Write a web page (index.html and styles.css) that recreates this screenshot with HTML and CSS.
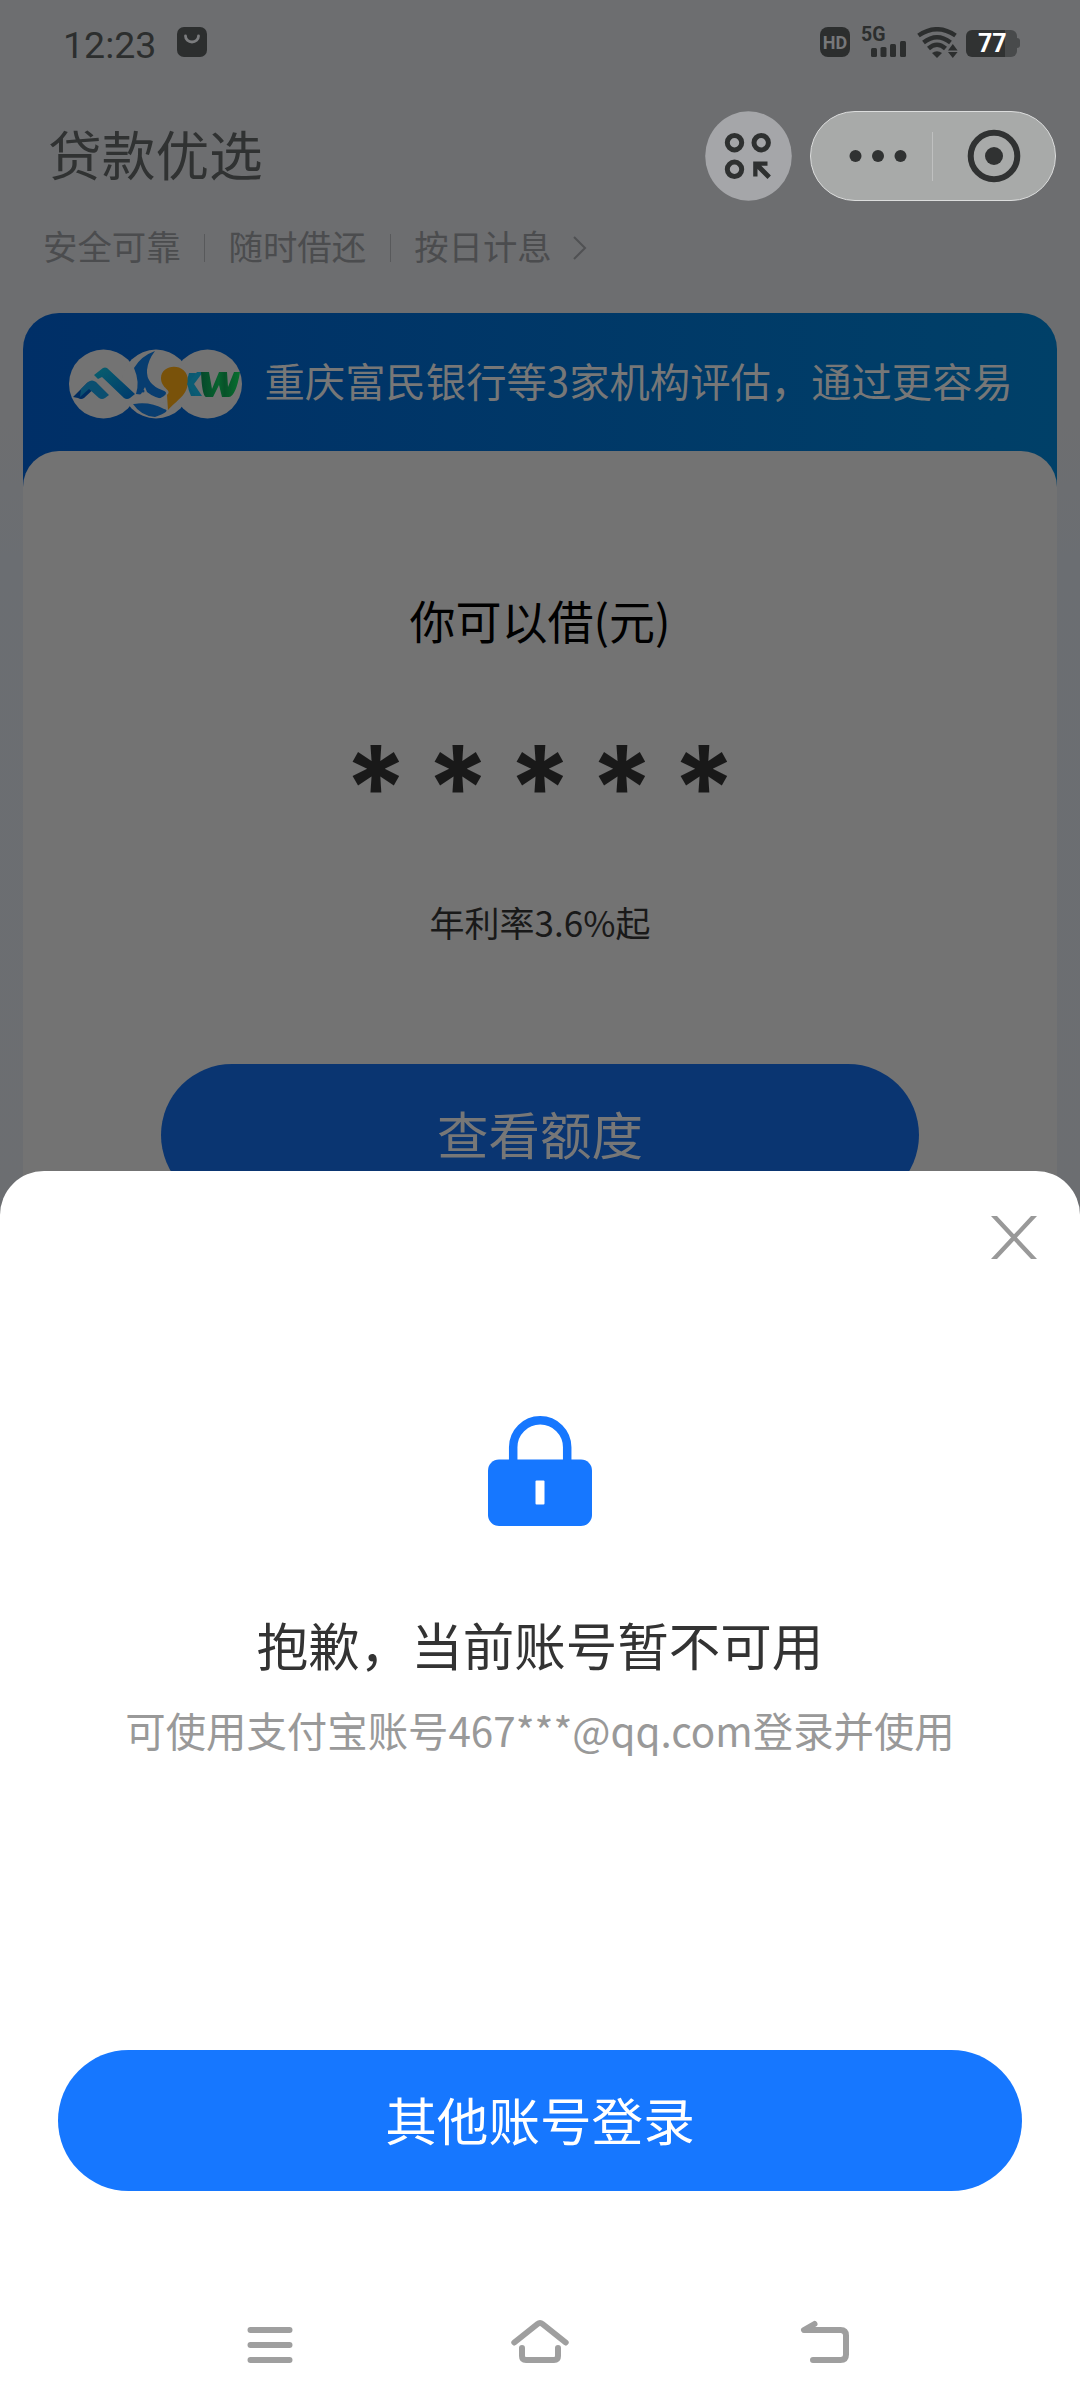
FILE: index.html
```html
<!DOCTYPE html>
<html lang="zh-CN">
<head>
<meta charset="utf-8">
<title>贷款优选</title>
<link rel="stylesheet" href="styles.css">
</head>
<body>
<div class="screen">
  <header class="status">
    <span class="clock">12:23</span>
    <svg class="bag" width="30" height="30" viewBox="0 0 30 30"><rect width="30" height="30" rx="7" fill="#2c2e2e"/><path d="M8.500 9a6.500 6 0 0 0 13 0" fill="none" stroke="#7b7c7e" stroke-width="2.800" stroke-linecap="round"/></svg>
    <div class="indicators">
      <span class="hd">HD</span>
      <div class="signal">
        <span class="net">5G</span>
        <svg width="47" height="30" viewBox="0 0 47 30" fill="#2c2e2e"><rect x="10" y="21" width="6" height="9" rx="1.500"/><rect x="19.500" y="20" width="6" height="10" rx="1.500"/><rect x="29" y="17" width="6" height="13" rx="1.500"/><rect x="39" y="14" width="6" height="16" rx="1.500"/></svg>
      </div>
      <svg class="wifi" width="42" height="32" viewBox="0 0 42 32"><g fill="none" stroke="#2c2e2e" stroke-width="4.500"><path d="M1.500 8.500Q20 -4 38.500 8.500"/><path d="M6.500 15.500Q20 5 33.500 15.500"/><path d="M11.500 21.500Q20 14 28.500 21.500"/></g><path d="M15 26q5-3.500 10 0l-5 5z" fill="#2c2e2e"/><path d="M31 23.500l4.800-6.500 4.800 6.500zM31 25h9.600l-4.800 6z" fill="#2c2e2e"/></svg>
      <div class="battery"><span>77</span></div>
    </div>
  </header>

  <div class="titlebar">
    <h1>贷款优选</h1>
    <svg class="apps" width="87" height="90" viewBox="0 0 87 90"><ellipse cx="43.500" cy="45" rx="43.300" ry="44.700" fill="#a5a6a9"/><g fill="none" stroke="#2e3030" stroke-width="5"><circle cx="29.500" cy="31.700" r="7.200"/><circle cx="56.200" cy="31.700" r="7.200"/><circle cx="29.500" cy="58.300" r="7.200"/></g><path d="M48.200 50.500h14.300v4.200h-6.200l9.600 9.800-3.400 3.500-10-10v7.400h-4.300z" fill="#2e3030"/></svg>
    <div class="capsule">
      <svg width="58" height="14" viewBox="0 0 58 14" fill="#303232"><circle cx="6.500" cy="7" r="6"/><circle cx="29" cy="7" r="6"/><circle cx="51.500" cy="7" r="6"/></svg>
      <i class="split"></i>
      <svg width="54" height="54" viewBox="0 0 54 54"><circle cx="27" cy="27" r="23.300" fill="none" stroke="#303232" stroke-width="6"/><circle cx="27" cy="27" r="9" fill="#303232"/></svg>
    </div>
  </div>

  <div class="features">
    <span>安全可靠</span><i></i><span>随时借还</span><i></i><span>按日计息</span>
    <svg width="16" height="24" viewBox="0 0 16 24"><path d="M2 1l11 11L2 23" fill="none" stroke="#505153" stroke-width="2"/></svg>
  </div>

  <main class="offer">
    <div class="banner">
      <svg class="logos" width="174" height="70" viewBox="0 0 174 70">
        <defs>
          <linearGradient id="sky" x1="0" y1="0" x2="1" y2="1"><stop offset="0" stop-color="#08606e"/><stop offset="1" stop-color="#00396c"/></linearGradient>
          <linearGradient id="leaf" x1="0" y1="0" x2="1" y2="0"><stop offset="0" stop-color="#06482a"/><stop offset=".45" stop-color="#08642f"/><stop offset=".6" stop-color="#075229"/><stop offset="1" stop-color="#08702f"/></linearGradient>
        </defs>
        <circle cx="34.500" cy="35" r="34.500" fill="#737373"/><circle cx="87" cy="35" r="34.500" fill="#737373"/><circle cx="138.500" cy="35" r="34.500" fill="#737373"/>
        <path d="M4 48l14-14q4-3 8 0l3 2-14 13q-3 2-6 0z" fill="#002d61"/>
        <path d="M12 40l7-7q4-3 8 0l13 13-4 3q-3 2-6 0L20 40l-9 8z" fill="#0b4f70"/>
        <path d="M25 26l9-7q2-1 4 0l28 26-5 4q-3 2-6 0L33 28l-4 2z" fill="url(#sky)"/>
        <path d="M86 2Q72 7 65 19q6 14 2 26l9 1q10 8 19 1 5-4-2-6-16-6-15-20 1-10 8-19z" fill="#083d70"/>
        <path d="M64 55q17-3 31 5 8 2-9 8-14-1-22-13z" fill="#083d70"/>
        <path d="M62 53l10-8 4-7 2 5q10 8 22 7l-7 4q-17-2-30 1z" fill="#737373"/><circle cx="74" cy="42" r="1.500" fill="#083d70"/>
        <path d="M92 29c0-15 27-16 27 3 0 14-11 19-20 29l-1-15c6-5-6-6-6-17z" fill="#79520a"/>
        <path d="M120 24h7l-3 11 3 12h-5q-6-13-2-23z" fill="#0a5972"/><path d="M134 23h-6l-10 12 9 12h6l-8-12z" fill="#0b5c74"/>
        <path d="M132 23h8l3 17 7-17h8l1 15 6-15h6q-4 24-11 25h-7l-3-12-6 12h-7q-4-1-5-25z" fill="url(#leaf)"/>
      </svg>
      <p>重庆富民银行等3家机构评估，通过更容易</p>
    </div>
    <section class="quota">
      <h2>你可以借(元)</h2>
      <div class="amount"><span>*</span><span>*</span><span>*</span><span>*</span><span>*</span></div>
      <p class="rate">年利率3.6%起</p>
      <div class="check">查看额度</div>
    </section>
  </main>

  <section class="sheet">
    <svg class="close" width="48" height="44" viewBox="0 0 48 44"><path d="M1 0h6l40 43h-6zM41 0h6L7 43H1z" fill="#999"/></svg>
    <svg class="lock" width="104" height="110" viewBox="0 0 104 110"><rect y="43.500" width="104" height="66.500" rx="11" fill="#1677ff"/><path d="M25.200 46V31.300a27 27 0 0 1 54 0V46" fill="none" stroke="#1677ff" stroke-width="8.500"/><rect x="47.500" y="64.500" width="9" height="24" rx="1" fill="#fff"/></svg>
    <h2>抱歉，当前账号暂不可用</h2>
    <p>可使用支付宝账号467***@qq.com登录并使用</p>
    <div class="login">其他账号登录</div>
    <nav>
      <svg width="60" height="60" viewBox="0 0 60 60"><path d="M10.500 15h39M10.500 30h39M10.500 45h39"/></svg>
      <svg width="60" height="60" viewBox="0 0 60 60"><path d="M4.300 27.500L27.500 9q2.500-2 5 0L55.700 27.500M12 33v8q0 4 4 4h28q4 0 4-4v-8"/></svg>
      <svg width="60" height="60" viewBox="0 0 60 60"><path d="M34.500 9L24 15H60.500q5.500 0 5.500 5.500v19q0 5.500-5.500 5.500H33"/></svg>
    </nav>
  </section>
</div>
</body>
</html>
```
FILE: styles.css
```css
* { box-sizing: border-box; margin: 0; padding: 0; }
body { font-family: "Noto Sans CJK SC", "Noto Sans", sans-serif; font-weight: 400; }
h1, h2 { font-weight: 400; }
svg { display: block; flex: none; }

.screen {
  position: relative;
  width: 1080px;
  height: 2408px;
  overflow: hidden;
  background: linear-gradient(#6d6e70 0, #6d6e70 420px, #6b6e72 560px, #6c6e71 1200px);
}

.status { display: flex; height: 111px; padding: 27px 60px 0 63px; color: #2c2e2e; }
.clock { width: 114px; font: 37.500px/36px Roboto, sans-serif; }
.indicators { display: flex; margin-left: auto; }
.hd {
  width: 30px; height: 30px; border-radius: 8px; background: #2c2e2e; color: #77787a;
  font: 700 18px/31px Roboto, sans-serif; text-align: center;
}
.signal { display: grid; margin-left: 11px; }
.signal > * { grid-area: 1 / 1; }
.net { font: 700 19.500px/16px Roboto, sans-serif; }
.wifi { margin-left: 9px; }
.battery {
  display: flex; width: 51px; height: 27px; margin: 3px 3px 0 7px; padding-left: 12px;
  border-radius: 6px; background: linear-gradient(90deg, #303232 39px, #484a4b 39px);
  color: #fff; font: 700 25px/28px Roboto, sans-serif;
}
.battery::after { content: ""; flex: none; width: 3px; height: 10px; margin: 8px 0 0 10.500px; border-radius: 0 3px 3px 0; background: #484a4b; }

.titlebar { display: flex; height: 90px; padding: 0 24px 0 48px; }
h1 { width: 656.500px; font-size: 53.700px; line-height: 83px; color: #303232; }
.capsule {
  display: flex; align-items: center; width: 246px; margin-left: 18.500px; padding-left: 38px;
  border: 1px solid #dcdddd; border-radius: 45px; background: #a8aaa9;
}
.split { width: 1px; height: 49px; margin: 0 34px 0 25px; background: #bfc0c0; }

.features { display: flex; align-items: center; height: 112px; padding: 0 0 25px 43px; font-size: 34.400px; line-height: 50px; color: #4b4c4e; }
.features i { width: 1px; height: 28px; margin: 6px 23.500px 0; background: #58595b; }
.features svg { margin: 6px 0 0 20px; }

.offer { width: 1034px; margin-left: 23px; border-radius: 36px 36px 0 0; background: linear-gradient(90deg, #002f67, #004068); }
.banner { display: flex; align-items: center; height: 138px; padding: 0 0 0 45.500px; color: #777; }
.logos { margin-top: 3px; }
.banner p { margin: -6px 0 0 22px; font-size: 40.350px; white-space: nowrap; }
.quota { display: flex; flex-direction: column; align-items: center; height: 900px; padding-top: 138px; border-radius: 36px 36px 0 0; background: #737373; }
.quota h2 { font-size: 46px; line-height: 60px; color: #000; }
.amount { display: flex; height: 100px; margin-top: 88px; color: #191919; font: 700 116px/100px Inter, sans-serif; }
.amount span { display: flex; justify-content: center; width: 82px; }
.rate { margin-top: 60px; font-size: 35px; line-height: 50px; color: #191919; }
.check { width: 758px; height: 142px; margin-top: 117px; border-radius: 71px; background: #0a3571; color: #777; font-size: 51.500px; line-height: 138px; text-align: center; }

.sheet {
  position: absolute; left: 0; right: 0; top: 1171px; bottom: 0;
  display: flex; flex-direction: column; align-items: center;
  border-radius: 44px 44px 0 0; background: #fff;
}
.close { margin: 45px 42px 0 auto; }
.lock { margin-top: 156px; }
.sheet h2 { margin-top: 80px; font-size: 51.500px; line-height: 76px; color: #333; }
.sheet p { margin-top: 18px; font-size: 40.400px; line-height: 60px; color: #999; }
.login { width: 964px; height: 141px; margin-top: 290px; border-radius: 70.500px; background: #1677ff; color: #fff; font-size: 51.600px; line-height: 137px; text-align: center; }
nav { display: flex; justify-content: center; gap: 210px; margin-top: 124px; }
nav svg { overflow: visible; fill: none; stroke: #9f9f9f; stroke-width: 6; stroke-linecap: round; stroke-linejoin: round; }
```
